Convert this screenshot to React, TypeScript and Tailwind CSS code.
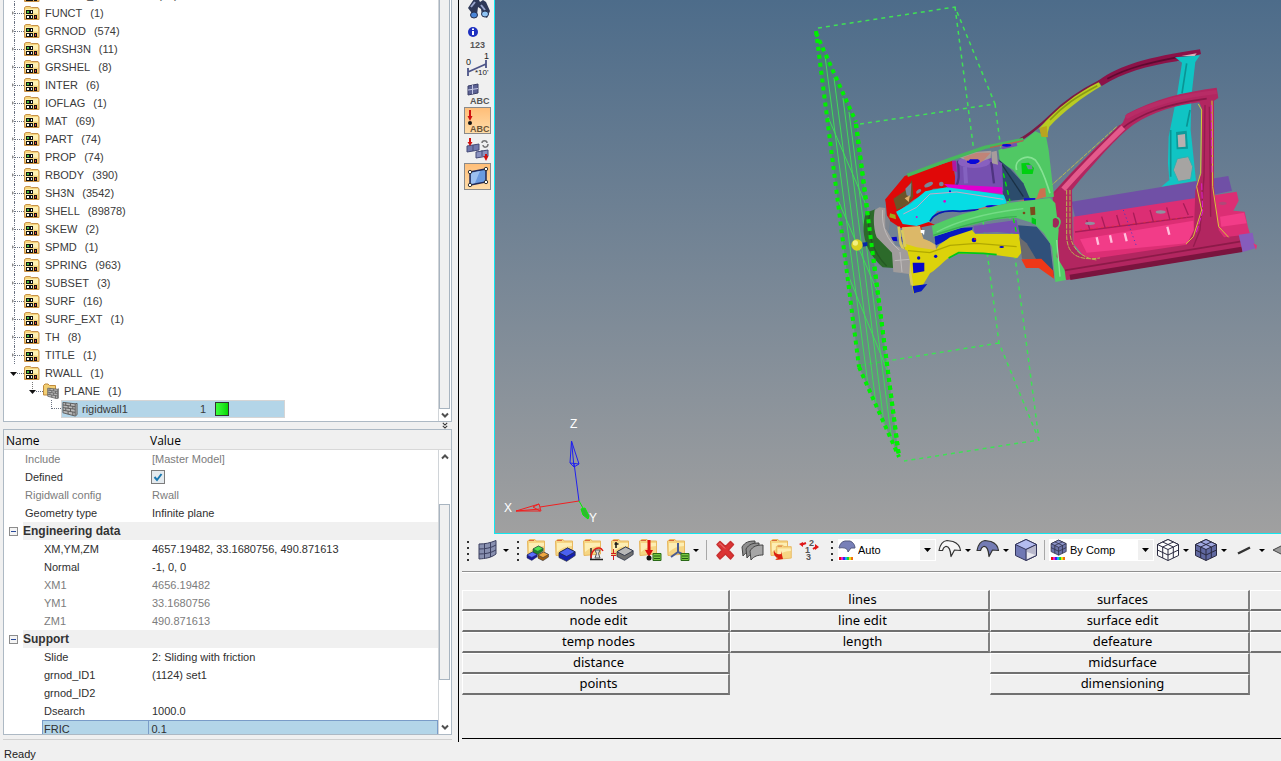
import React from "react";

const GREEN = "#00f000";

type TreeNode = { name: string; count: string };

const treeNodes: TreeNode[] = [
  { name: "ENGINE_KEYWORD", count: "(15)" },
  { name: "FUNCT", count: "(1)" },
  { name: "GRNOD", count: "(574)" },
  { name: "GRSH3N", count: "(11)" },
  { name: "GRSHEL", count: "(8)" },
  { name: "INTER", count: "(6)" },
  { name: "IOFLAG", count: "(1)" },
  { name: "MAT", count: "(69)" },
  { name: "PART", count: "(74)" },
  { name: "PROP", count: "(74)" },
  { name: "RBODY", count: "(390)" },
  { name: "SH3N", count: "(3542)" },
  { name: "SHELL", count: "(89878)" },
  { name: "SKEW", count: "(2)" },
  { name: "SPMD", count: "(1)" },
  { name: "SPRING", count: "(963)" },
  { name: "SUBSET", count: "(3)" },
  { name: "SURF", count: "(16)" },
  { name: "SURF_EXT", count: "(1)" },
  { name: "TH", count: "(8)" },
  { name: "TITLE", count: "(1)" },
];

/* ---------- Small tree icons ---------- */

function FolderShape() {
  return (
    <>
      <path d="M.5 2.500 2 1.500h4l1.500 1h6.500L15 4v10.500H.5z" fill="#f5d47c" stroke="#c8924a" />
      <path d="M1.500 4h12.500V9c-5-1-9 0-12.500 2z" fill="#fdf0b4" />
      <path d="M1 13.500h13.500" stroke="#e8a84a" />
    </>
  );
}

function CardFolderIcon() {
  return (
    <svg className="h-4 w-4 shrink-0" viewBox="0 0 16 16" aria-hidden="true">
      <FolderShape />
      <path d="M2 5h4v4H2zM6 5h3v4H6zM2 10h4v4H2zM6 10h3v4H6zM10 10h3v4h-3z" fill="#111" />
      <rect x="3" y="6" width="2" height="2" fill="#3fbf3f" />
      <rect x="7" y="6" width="1" height="2" fill="#fff" />
      <rect x="3" y="11" width="2" height="2" fill="#fff" />
      <rect x="7" y="11" width="1" height="2" fill="#e8f0ff" />
      <rect x="11" y="11" width="1" height="2" fill="#e04040" />
    </svg>
  );
}

function Bricks() {
  return (
    <>
      <path d="M1 1.500 14 3l2-.5v12L14 16 1 12.500z" fill="#b9b9b9" stroke="#5a5a5a" />
      <path
        d="M1 4.200l13 1.800M1 7l13 1.800M1 9.800l13 2.300M4 1.800v2.800M9 2.500v2.800M6.500 5v2.700M11.500 5.700v2.800M4 7.400v2.900M9 8.100v3M6.500 10.800v3.200M11.500 11.600v3.600M14 3v12.500"
        stroke="#5a5a5a"
        fill="none"
      />
    </>
  );
}

function WallFolderIcon() {
  return (
    <svg className="h-4 w-4 shrink-0" viewBox="0 0 16 16" aria-hidden="true">
      <path d="M.5 2.500 2 1h3l1.500 1.500h6V12H.5z" fill="#f2cf74" stroke="#c08a3c" />
      <g transform="translate(4 4) scale(.74)">
        <Bricks />
      </g>
    </svg>
  );
}

function WallIcon() {
  return (
    <svg className="h-4 w-4 shrink-0" viewBox="0 0 17 17" aria-hidden="true">
      <Bricks />
    </svg>
  );
}

function Dots() {
  return <span className="w-[9px] shrink-0 border-t border-dotted border-gray-500" />;
}

/* ---------- Scroll bar ---------- */

function Chevron({ up = false }: { up?: boolean }) {
  return (
    <svg className="h-2 w-2" viewBox="0 0 8 8" aria-hidden="true">
      <path d={up ? "M1 5.500 4 2.500 7 5.500" : "M1 2.500 4 5.500 7 2.500"} fill="none" stroke="#505050" strokeWidth="2" />
    </svg>
  );
}

/* ---------- Model tree ---------- */

function ModelTree() {
  return (
    <section
      aria-label="Model browser"
      className="flex h-[422px] shrink-0 overflow-hidden border border-t-0 border-[#adb9c4] bg-white text-[11px] text-[#3a3a3a]"
    >
      <ul className="-mt-[14px] min-w-0 flex-1">
        {treeNodes.map((n) => (
          <li key={n.name} className="ml-2 flex h-[18px] items-center">
            <span className="flex h-full w-[3px] items-center border-r border-dotted border-gray-500">
              <svg className="h-[6px] w-[3px]" viewBox="0 0 3 6" aria-hidden="true">
                <path d="M0 0 3 3 0 6z" fill="#8a8a8a" />
              </svg>
            </span>
            <Dots />
            <CardFolderIcon />
            <span className="ml-[5px]">{n.name}</span>
            <span className="ml-2">{n.count}</span>
          </li>
        ))}
        <li className="ml-[6px] flex h-[18px] items-center">
          <svg className="h-[5px] w-[7px]" viewBox="0 0 7 5" aria-hidden="true">
            <path d="M0 1h7L3.500 5z" fill="#111" />
          </svg>
          <span className="w-[7px] border-t border-dotted border-gray-500" />
          <CardFolderIcon />
          <span className="ml-[5px]">RWALL</span>
          <span className="ml-2">(1)</span>
        </li>
        <li className="ml-[25px] flex h-[18px] items-center">
          <svg className="h-full w-[7px]" viewBox="0 0 7 18" aria-hidden="true">
            <path d="M3.500 0v7" stroke="#777" strokeDasharray="1 1" />
            <path d="M0 8h7l-3.500 4z" fill="#111" />
          </svg>
          <span className="w-[7px] border-t border-dotted border-gray-500" />
          <WallFolderIcon />
          <span className="ml-[5px]">PLANE</span>
          <span className="ml-2">(1)</span>
        </li>
        <li className="ml-[47px] flex h-[18px]">
          <span className="h-[9px] w-[10px] border-b border-l border-dotted border-gray-500" />
          <span className="flex h-[18px] w-[224px] items-center border border-[#d5d5d5] bg-[#b3d5e8]">
            <WallIcon />
            <span className="ml-1 w-[118px]">rigidwall1</span>
            <span className="w-[15px]">1</span>
            <span className="h-[14px] w-[14px] border border-[#333] bg-linear-to-r from-[#3cff3c] to-[#00d800]" />
          </span>
        </li>
      </ul>
      <div className="flex w-[13px] shrink-0 flex-col border-l border-[#d0d4d8] bg-white">
        <div className="mr-px h-[409px] border border-t-0 border-[#a8b4c0] bg-[#f0f0f0]" />
        <button type="button" aria-label="Scroll tree down" className="flex flex-1 items-center justify-center">
          <Chevron />
        </button>
      </div>
    </section>
  );
}

/* ---------- Property table ---------- */

type Row = { name: string; value?: string; muted?: boolean; group?: boolean; nested?: boolean; check?: boolean; selected?: boolean };

const rows: Row[] = [
  { name: "Include", value: "[Master Model]", muted: true },
  { name: "Defined", check: true },
  { name: "Rigidwall config", value: "Rwall", muted: true },
  { name: "Geometry type", value: "Infinite plane" },
  { name: "Engineering data", group: true },
  { name: "XM,YM,ZM", value: "4657.19482, 33.1680756, 490.871613", nested: true },
  { name: "Normal", value: "-1, 0, 0", nested: true },
  { name: "XM1", value: "4656.19482", nested: true, muted: true },
  { name: "YM1", value: "33.1680756", nested: true, muted: true },
  { name: "ZM1", value: "490.871613", nested: true, muted: true },
  { name: "Support", group: true },
  { name: "Slide", value: "2: Sliding with friction", nested: true },
  { name: "grnod_ID1", value: "(1124) set1", nested: true },
  { name: "grnod_ID2", value: "", nested: true },
  { name: "Dsearch", value: "1000.0", nested: true },
  { name: "FRIC", value: "0.1", nested: true, selected: true },
];

function PropertyRow({ row }: { row: Row }) {
  if (row.group) {
    return (
      <tr className="h-[18px]">
        <td colSpan={2} className="p-0">
          <div className="flex h-[18px] items-center">
            <button
              type="button"
              aria-label={`Collapse ${row.name}`}
              className="mr-[5px] ml-[5px] flex h-[9px] w-[9px] items-center justify-center border border-[#8c8c8c] bg-[#f4f4f4]"
            >
              <span className="h-px w-[5px] bg-[#2a4a9a]" />
            </button>
            <div className="flex h-full flex-1 items-center bg-[#f0f0f0] text-[12px] font-bold text-[#333]">{row.name}</div>
          </div>
        </td>
      </tr>
    );
  }
  const tone = row.muted ? "text-[#7c7c7c]" : "text-[#2f2f2f]";
  if (row.selected) {
    return (
      <tr className={`h-[18px] ${tone}`}>
        <td className="p-0 pl-[38px]">
          <div className="flex h-[18px] items-center border border-r-0 border-[#7a9cc8] bg-[#b3d5e8] pl-px">{row.name}</div>
        </td>
        <td className="border border-[#7a9cc8] bg-[#b3d5e8] p-0 pl-[3px]">{row.value}</td>
      </tr>
    );
  }
  return (
    <tr className={`h-[18px] ${tone}`}>
      <td className={row.nested ? "p-0 pl-[40px]" : "p-0 pl-[21px]"}>
        {row.check ? <label htmlFor="defined">{row.name}</label> : row.name}
      </td>
      <td className="p-0 pl-[4px]">
        {row.check ? (
          <span className="relative -ml-px flex h-[14px] w-[14px]">
            <input
              id="defined"
              type="checkbox"
              defaultChecked
              className="peer h-[14px] w-[14px] appearance-none border border-[#7c7c7c] bg-[#e4eaee]"
            />
            <svg className="pointer-events-none absolute inset-0 hidden h-[14px] w-[14px] peer-checked:block" viewBox="0 0 14 14" aria-hidden="true">
              <path d="M3.500 7 6 10 10.500 4" fill="none" stroke="#1a78b0" strokeWidth="2" />
            </svg>
          </span>
        ) : (
          row.value
        )}
      </td>
    </tr>
  );
}

function PropertyPanel() {
  return (
    <section aria-label="Entity editor" className="flex min-h-0 flex-1 flex-col overflow-hidden border border-[#adb9c4] bg-white">
      <div className="flex h-5 shrink-0 items-center border-b border-[#d8d8d8] bg-[#f0f0f0] pt-[3px] pl-[2px] font-['Open_Sans','Noto_Sans',sans-serif] text-[12px] leading-[16px] text-black">
        <span className="w-[144px]">Name</span>
        <span>Value</span>
      </div>
      <div className="flex min-h-0 flex-1">
        <div className="min-w-0 flex-1 overflow-hidden">
          <table className="w-full table-fixed border-collapse text-[11px] leading-[16px]">
            <colgroup>
              <col className="w-[144px]" />
              <col />
            </colgroup>
            <tbody>
              {rows.map((r) => (
                <PropertyRow key={r.name} row={r} />
              ))}
            </tbody>
          </table>
        </div>
        <div className="flex w-[13px] shrink-0 flex-col border-l border-[#d0d4d8] bg-white">
          <button type="button" aria-label="Scroll properties up" className="flex h-[14px] items-center justify-center">
            <Chevron up />
          </button>
          <div className="mt-10 mr-px h-[176px] border border-[#a8b4c0] bg-[#f0f0f0]" />
          <button type="button" aria-label="Scroll properties down" className="mt-auto flex h-[14px] items-center justify-center">
            <Chevron />
          </button>
        </div>
      </div>
    </section>
  );
}

/* ---------- View toolbar (vertical) ---------- */

function SideButton({ label, active = false, children }: { label: string; active?: boolean; children: React.ReactNode }) {
  return (
    <button
      type="button"
      aria-label={label}
      className={
        active
          ? "mt-px flex h-[27px] w-[27px] shrink-0 items-center justify-center border border-[#8a8a8a] bg-linear-to-b from-[#ffbe78] to-[#ffdca8]"
          : "mt-px flex h-[27px] w-[27px] shrink-0 items-center justify-center"
      }
    >
      <svg className="h-6 w-6 shrink-0 overflow-visible" viewBox="0 0 24 24" aria-hidden="true">
        {children}
      </svg>
    </button>
  );
}

const tiny = { fontFamily: "Liberation Sans, Arial, sans-serif" };

function SideToolbar() {
  return (
    <div role="toolbar" aria-label="Display tools" className="flex w-8 shrink-0 flex-col items-start overflow-hidden bg-[#f0f0f0] pl-[2px]">
      <div className="-mt-[6px] flex flex-col">
        <SideButton label="Find">
          <path d="M2 11 8 2l5 1 1 2 3-2 3 2 4 9-3 7-5-3-1-6-3-2-1 8-5 3-1-6z" fill="#2e3858" />
          <path d="M5 10 9 5M15 8l4 5" stroke="#98a4cc" strokeWidth="2" />
          <ellipse cx="8" cy="18" rx="3.500" ry="3" fill="#4a86d8" stroke="#26304e" />
          <ellipse cx="19" cy="17" rx="3.500" ry="3" fill="#8fc4f4" stroke="#26304e" />
        </SideButton>
        <SideButton label="Entity numbers">
          <circle cx="7" cy="7" r="5" fill="#1d2fc0" />
          <path d="M7 6v4M7 3.500v1.500" stroke="#fff" strokeWidth="2" />
          <text x="4" y="23" fontSize="9" fontWeight="bold" fill="#555" style={tiny}>123</text>
        </SideButton>
        <SideButton label="Measure">
          <path d="M2 19 20 11M2 15v8M20 7v8" stroke="#4c5488" strokeWidth="1.800" />
          <text x="0" y="12" fontSize="9" fill="#222" style={tiny}>0</text>
          <text x="18" y="6" fontSize="9" fill="#222" style={tiny}>1</text>
          <text x="9" y="22" fontSize="8" fill="#222" style={tiny}>*10'</text>
        </SideButton>
        <SideButton label="Element labels">
          <path d="M2 5 12 3v9l-10 2z" fill="#5c6294" stroke="#3a3f68" />
          <path d="M6.500 4v9M2 9l10-1.500" stroke="#c4c8e4" />
          <text x="4" y="23" fontSize="9" fontWeight="bold" fill="#555" style={tiny}>ABC</text>
        </SideButton>
        <SideButton label="Load labels" active>
          <path d="M4 1v8" stroke="#d01010" strokeWidth="2" />
          <path d="M1.500 7h5L4 12z" fill="#d01010" />
          <circle cx="4" cy="14" r="2" fill="#111" />
          <text x="4" y="23" fontSize="9" fontWeight="bold" fill="#6a5438" style={tiny}>ABC</text>
        </SideButton>
        <SideButton label="Swap loads">
          <path d="M1 9 13 7v6L1 15z" fill="#7078ac" stroke="#444a78" />
          <path d="M10 15l12-2v6l-12 2z" fill="#8a92c0" stroke="#444a78" />
          <path d="M7 8v6M16 13v6" stroke="#444a78" />
          <path d="M4 1v5M20 17v3" stroke="#d01010" strokeWidth="2" />
          <path d="M1.500 5h5L4 9zM17.500 19h5L20 24z" fill="#d01010" />
          <path d="M16 6c0-3 5-3 5 0M22 7c0 4-5 4-5 1" fill="none" stroke="#777" strokeWidth="1.500" />
        </SideButton>
        <SideButton label="Handles" active>
          <path d="M4 7 20 4v13L4 20z" fill="#6a9ae0" stroke="#222a58" strokeWidth="1.500" />
          <path d="M5 8 14 6 9 18 5 19z" fill="#9cc0f0" />
          <g fill="#fff" stroke="#333">
            <circle cx="4" cy="7" r="1.700" />
            <circle cx="20" cy="4" r="1.700" />
            <circle cx="20" cy="17" r="1.700" />
            <circle cx="4" cy="20" r="1.700" />
          </g>
        </SideButton>
      </div>
    </div>
  );
}

/* ---------- Graphics view ---------- */

function RigidWall() {
  return (
    <g fill="none">
      <g stroke="#3fe055" strokeWidth="1.500" strokeDasharray="4 4">
        <path d="M818 28 955 7 995 104 860 124" />
        <path d="M955 7 999 343 1039 440M995 104l44 336-135 21M999 343 862 365" />
      </g>
      <path d="M816 33 856 122 899 457 859 367z" fill="#3c8c5c" fillOpacity=".4" />
      <g stroke="#3fdc58" strokeWidth="1">
        <path d="M825 56 868 385M834 78 876 404M843 98 884 424M849 112 892 442" />
        <path d="M828 117 866 205M838 200 881 300M846 270 888 372" />
      </g>
      <g stroke={GREEN} strokeWidth="4" strokeDasharray="4 4">
        <path d="M816 31 859 367" />
        <path d="M816 33 856 122" />
        <path d="M856 124 899 457" />
        <path d="M859 367 899 457" />
      </g>
    </g>
  );
}

/* Door ring, B-pillars and floor */
function SideFrame() {
  return (
    <g transform="translate(1020 30) scale(.33333)">
      <path d="M155 515 625 438 636 482 520 508 165 562z" fill="#7050a6" />
      <path d="M160 560 650 485 656 512 640 542 674 545 684 592 690 612 640 640 200 690 160 640z" fill="#dc2e74" />
      <path d="M180 628 520 572 522 612 500 640 200 668z" fill="#f23c88" />
      <path d="M600 560 672 548 680 580 604 590z" fill="#f23c88" />
      <path d="M165 606 520 560M200 570 210 600M245 560 255 592M290 555 300 590M340 548 350 585M390 540 400 575M440 532 450 570M490 520 505 555" stroke="#a81c58" strokeWidth="4" fill="none" />
      <path d="M230 622l5 22M270 616l5 22M314 610l6 24M442 590l6 24" stroke="#ffc0dc" strokeWidth="7" />
      <path d="M180 600 500 562" stroke="#e83030" strokeWidth="2" strokeDasharray="6 10" />
      <path d="M310 540 350 650" stroke="#3838c8" strokeWidth="3" strokeDasharray="3 9" />
      <ellipse cx="210" cy="580" rx="15" ry="5" fill="#9090a0" />
      <ellipse cx="422" cy="546" rx="15" ry="5" fill="#9090a0" />
      <ellipse cx="608" cy="520" rx="12" ry="5" fill="#b04878" />

      <path d="M0 328C20 318 60 288 90 258 140 208 190 178 242 152" stroke="#7c1a44" strokeWidth="7" fill="none" />
      <path d="M58 295C110 235 170 190 236 157L243 169C190 200 130 245 88 290L80 320 68 318z" fill="#b9cc22" />
      <path d="M90 270C130 226 170 200 232 167" stroke="#8a9c14" strokeWidth="5" fill="none" />
      <path d="M235 152C300 105 380 82 540 58L543 72 470 94C380 108 310 128 245 168z" fill="#8c1248" />
      <path d="M262 146C330 110 400 96 470 82" stroke="#5c0a30" strokeWidth="5" fill="none" />

      <path d="M465 82 540 76 526 96 514 200 512 300 528 452 424 470 448 450 444 400 446 320 462 240 472 190 486 98z" fill="#10c4c4" />
      <path d="M500 100 486 190M510 240 500 290M452 300 452 440" stroke="#0a9494" strokeWidth="5" />
      <path d="M484 78 530 70 524 78z" fill="#d8b0b8" />
      <path d="M468 306 500 302 504 356 470 358z" fill="#0c9a9a" />
      <path d="M473 315 495 312 497 350 475 352z" fill="#b8b0b0" />
      <path d="M472 386 505 380 518 410 512 448 475 454 460 420z" fill="#a6a4a2" stroke="#30b0b0" strokeWidth="3" />

      <path
        fillRule="evenodd"
        d="M98 490 150 432 230 350 308 278 320 252C400 208 490 186 590 173L595 204 582 212 582 470 596 600 612 622 664 616 668 664 140 750 108 720 100 600zM156 480 178 452C220 405 290 320 340 284 400 245 470 225 538 217L546 236 544 430 526 480 522 600 500 644 250 682C190 690 165 670 158 630z"
        fill="#b22660"
      />
      <path d="M318 262C400 216 500 196 590 186" stroke="#b82c66" strokeWidth="12" fill="none" />
      <path d="M300 300C360 250 440 222 560 206" stroke="#8a1848" strokeWidth="5" fill="none" />
      <path d="M130 478C190 410 250 350 310 292" stroke="#e45a8c" strokeWidth="16" fill="none" />
      <path d="M104 488C170 414 230 356 300 286" stroke="#a82458" strokeWidth="4" fill="none" />
      <path d="M150 742 666 658" stroke="#7a143e" strokeWidth="16" fill="none" />
      <path d="M130 722 664 634" stroke="#8c1a48" strokeWidth="5" fill="none" />
      <path d="M555 225 552 440 540 600 520 650M568 230 572 560" stroke="#941c4e" strokeWidth="4" fill="none" />
      <path d="M535 222 545 240 542 430 530 470 545 540 520 620 498 642M576 212 578 470 596 590 626 622" stroke="#d8c838" strokeWidth="3" fill="none" />
      <path d="M545 460 548 545 528 610M574 225 576 430" stroke="#e020d0" strokeWidth="3" fill="none" strokeDasharray="20 6" />
      <path d="M140 480 140 620C142 670 170 694 240 684M150 480 150 610C154 660 190 685 230 690M90 470 290 290" stroke="#b8b850" strokeWidth="3" fill="none" strokeDasharray="14 3" />
      <path d="M656 614 698 608 706 655 668 666z" fill="#865cbc" />
      <path d="M700 640 711 646 708 660z" fill="#e83078" />
    </g>
  );
}

/* Rails, shock tower, wheel house and bumper */
function FrontEnd() {
  return (
    <g transform="translate(850 130) scale(.33333)">
      <path d="M445 60 520 32 556 4 588 18 596 60 604 130 612 200 560 206 536 204 520 160 490 120 450 96z" fill="#50c864" />
      <path d="M568 -6 590 -12 594 22 574 20z" fill="#b9a51e" />
      <path d="M500 120C490 90 530 70 556 90 580 120 590 160 600 190" stroke="#86e294" strokeWidth="5" fill="none" />
      <path d="M514 100 536 98 552 114 548 132 516 132z" fill="#00d010" />
      <path d="M528 104 545 106 548 118 534 118z" fill="#6c8894" />
      <path d="M520 26C540 12 552 4 570 -14" stroke="#7c1a44" strokeWidth="4" fill="none" />
      <path d="M446 88 480 116 520 160 540 206 470 214 458 190z" fill="#2c4c6c" />
      <path d="M450 95 520 200" stroke="#1a3044" strokeWidth="4" />

      <path d="M164 138 308 92 320 172 250 176 190 210 138 250 160 288 118 262 106 208z" fill="#e00808" />
      <path d="M130 206 168 180 186 150 190 200 176 222 140 240z" fill="#6c5428" />
      <path d="M166 176 184 158 182 200 170 196z" fill="#76889a" />
      <path d="M164 205 180 196 176 216z" fill="#dcb068" />
      <ellipse cx="206" cy="184" rx="9" ry="5" transform="rotate(-40 206 184)" fill="#76889a" />
      <ellipse cx="236" cy="164" rx="14" ry="6" transform="rotate(-25 236 164)" fill="#76889a" />
      <ellipse cx="274" cy="162" rx="7" ry="7" fill="#76889a" />

      <path d="M318 96 430 84 456 100 460 184 400 178 314 166z" fill="#7650b0" />
      <path d="M324 92C326 130 330 150 318 168M424 96 432 160" stroke="#4e3480" strokeWidth="7" fill="none" />
      <path d="M345 110 348 160" stroke="#8462c0" strokeWidth="12" />
      <ellipse cx="372" cy="96" rx="48" ry="18" fill="#8860c0" />
      <path d="M306 92 318 92 320 126 308 122z" fill="#b018a0" />
      <path d="M424 66 440 62 444 104 426 100z" fill="#a89c9c" />
      <path d="M324 80 372 66 424 62 422 84 400 92 340 88z" fill="#a89c9c" />
      <path d="M340 82 380 68 422 68 400 92 384 102 356 102z" fill="#c08478" />
      <path d="M350 92h6l4-4h24l6 5-6 6-8 3h-14l-10-4z" fill="#0808d8" />
      <path d="M172 136 300 88 404 52 520 28" stroke="#48b85c" strokeWidth="10" fill="none" />
      <path d="M420 53 520 32" stroke="#b46450" strokeWidth="4" />
      <path d="M454 50 500 38 502 48 458 58z" fill="#7650b0" />
      <ellipse cx="470" cy="46" rx="14" ry="4" fill="#0808d8" />
      <path d="M282 162 456 172 458 192 380 184 300 178z" fill="#e000d0" />

      <path d="M137 246 180 222 226 184 290 172 400 186 462 196 470 220 420 232 330 242 262 242 240 270 236 290 152 288z" fill="#06dce4" />
      <path d="M160 252 200 232 240 192 320 186 460 208" stroke="#c8a8c8" strokeWidth="3" fill="none" />
      <path d="M240 274C254 246 290 240 330 244L400 238" stroke="#0818b0" strokeWidth="5" fill="none" />
      <circle cx="284" cy="214" r="4" fill="#e000d0" />
      <circle cx="200" cy="261" r="3" fill="#e000d0" />
      <circle cx="300" cy="184" r="3" fill="#0808d8" />
      <path d="M106 208 128 212 140 250 158 282 200 288 236 276 262 288 230 300 152 294 112 268z" fill="#dc0808" />
      <path d="M120 250 136 254 138 268 118 262z" fill="#a0a818" />

      <path d="M370 288 500 270 508 312 440 306 374 310z" fill="#7650b0" />
      <path d="M246 322 330 294 368 292 364 306 290 330 258 346z" fill="#0818c0" />
      <path d="M156 292 210 288 218 320 256 344 260 366 200 364 160 350z" fill="#dcb868" />
      <path d="M214 292 250 284 256 340 220 326z" fill="#70808e" />
      <path d="M212 300h12l-2 16-4-6-6-2z" fill="#fff" />
      <path d="M160 340 200 352 256 360 268 344 300 322 366 300 376 312 506 312 516 366 502 384 400 370 320 372C284 384 270 412 240 430L206 486 190 490 174 400z" fill="#dcd20a" />
      <path d="M174 362 240 368 300 346 380 340 500 350" stroke="#b0a800" strokeWidth="4" fill="none" />
      <path d="M188 398 223 398 223 424 190 430z" fill="#0808c8" />
      <path d="M188 468 232 462 214 484 192 490z" fill="#0818c0" />
      <path d="M296 384 326 368 400 370 440 374" stroke="#00c818" strokeWidth="5" fill="none" />
      <circle cx="372" cy="330" r="7" fill="#0808c8" />
      <circle cx="375" cy="327" r="3" fill="#e01010" />
      <g fill="#0808c8">
        <circle cx="206" cy="384" r="5" />
        <circle cx="257" cy="379" r="5" />
        <ellipse cx="455" cy="351" rx="7" ry="3" />
        <path d="M124 322 140 320 142 334 128 332zM148 322l9-2v16l-8-2z" />
      </g>
      <path d="M146 290 152 340 176 400 186 466M156 300 166 350" stroke="#d8c860" strokeWidth="8" fill="none" />

      <path d="M504 286 560 290 600 340 612 440 570 400 524 384 512 330z" fill="#30507a" />
      <path d="M508 322 530 340 560 390 516 386z" fill="#6a6a6e" />
      <path d="M514 388 574 386 610 422 612 446 566 414 528 414z" fill="#ee3818" />
      <path d="M384 236 420 226 470 226 440 240 390 244z" fill="#b87860" />
      <ellipse cx="426" cy="229" rx="20" ry="4" fill="#0808d8" />
      <path d="M500 214 560 204 570 176 586 174 588 200 540 214z" fill="#cc7050" />
      <path d="M522 204h34v8h-34z" fill="#1018c8" />
      <path d="M246 288C320 250 420 232 480 218L600 204 616 220 626 300 620 380 644 420 648 450 616 456 606 350 582 310 550 280 500 264C420 262 330 296 250 320z" fill="#52cc66" />
      <path d="M260 306C330 270 430 246 520 236" stroke="#74dc86" strokeWidth="4" fill="none" />
      <path d="M250 316C330 290 420 262 500 260" stroke="#3cae52" strokeWidth="4" fill="none" />
      <path d="M540 232 555 230 556 254 542 256z" fill="#7c4a1c" />
      <circle cx="522" cy="249" r="4" fill="#7c4a1c" />
      <path d="M545 262 558 268 558 284 545 280z" fill="#00c818" />
      <path d="M606 268C612 256 630 262 630 276 628 296 614 300 606 290z" stroke="#52cc66" strokeWidth="5" fill="#a02458" />
      <path d="M620 330 630 440" stroke="#8ae498" strokeWidth="4" />

      <path d="M48 248 76 238 78 300 128 364 130 414 98 412C50 370 28 310 48 248z" fill="#2c6a2a" />
      <path d="M60 250C46 300 70 370 110 408" stroke="#245a22" strokeWidth="4" fill="none" />
      <path d="M74 240 88 232 106 234 108 296 136 346 172 362 180 394 178 432 130 426 126 368 80 322C70 296 70 262 74 240z" fill="#a09c9c" />
      <path d="M106 250 120 270 116 304 106 296z" fill="#80868e" />
      <path d="M98 240C94 290 110 330 148 360M150 366 156 426M134 392 178 388" stroke="#c0bcbc" strokeWidth="3" fill="none" />
      <path d="M36 338 52 336 52 348 38 350z" fill="#0828a8" />
      <circle cx="21" cy="345" r="17" fill="#d8d020" />
      <circle cx="16" cy="339" r="8" fill="#f4f080" />
      <path d="M460 130 480 214M490 266 500 312" stroke={GREEN} strokeWidth="4" strokeDasharray="14 12" />
    </g>
  );
}

function Triad() {
  const font = { fontFamily: "Liberation Sans, Arial, sans-serif" };
  return (
    <g fill="none">
      <g stroke="#2020f0">
        <path d="M579 501 574 463M571.500 441l-1.500 22 9 1zM571.500 441l2.500 26-4-4M579 464l-5 3" />
      </g>
      <g stroke="#f02020">
        <path d="M579 501 540 507M516 511l23-7 2 7zM516 511l24-2M539 504l-6 3 7 4" />
      </g>
      <path d="M579 501l4 7" stroke={GREEN} />
      <path d="M581 509l4-1 4 8-1 3-5-4z" fill="#30b830" stroke={GREEN} />
      <g fill="#fff" fontSize="12" style={font}>
        <text x="504" y="512">X</text>
        <text x="570" y="428">Z</text>
        <text x="589" y="522">Y</text>
      </g>
    </g>
  );
}

function GraphicsView() {
  return (
    <div className="min-h-0 min-w-0 flex-1 border-b border-l border-[#10e8f0] bg-linear-to-b from-[#4d6c8a] to-[#a0a0a0]">
      <svg
        className="block h-full w-full"
        viewBox="495 0 786 533"
        preserveAspectRatio="xMinYMin slice"
        role="img"
        aria-label="Vehicle body model with rigid wall"
      >
        <RigidWall />
        <SideFrame />
        <FrontEnd />
        <path d="M856 124 899 457" stroke={GREEN} strokeWidth="4" strokeDasharray="4 4" />
        <Triad />
      </svg>
    </div>
  );
}

/* ---------- Bottom toolbar ---------- */

function Grip() {
  return (
    <svg className="mx-[4px] h-6 w-[4px] shrink-0" viewBox="0 0 4 24" aria-hidden="true">
      <path d="M1 3h2v2H1zM1 9h2v2H1zM1 15h2v2H1zM1 21h2v2H1z" fill="#333" />
    </svg>
  );
}

function MenuArrow({ label }: { label: string }) {
  return (
    <button type="button" aria-label={label} className="flex h-7 w-[10px] shrink-0 items-center justify-start pl-px">
      <svg className="h-[3px] w-[6px]" viewBox="0 0 6 3" aria-hidden="true">
        <path d="M0 0h6L3 3z" fill="#000" />
      </svg>
    </button>
  );
}

function Tool({ label, children }: { label: string; children: React.ReactNode }) {
  return (
    <button type="button" aria-label={label} className="flex h-7 w-7 shrink-0 items-center justify-center">
      <svg className="h-6 w-6 overflow-visible" viewBox="0 0 24 24" aria-hidden="true">
        {children}
      </svg>
    </button>
  );
}

function BigFolder() {
  return (
    <>
      <path d="M1.500 3 4 1.500h5l1 1.500h8.500v13L2 17.500z" fill="#f6d684" stroke="#e8b860" />
      <path d="M3 5h15v3C12 8 7 10 3 14z" fill="#fdeeb4" />
      <path d="M3 2.500h5" stroke="#d86a3a" />
    </>
  );
}

function Slab({ x, y, s, top, side }: { x: number; y: number; s: number; top: string; side: string }) {
  return (
    <g transform={`translate(${x} ${y}) scale(${s})`} stroke="#222a40" strokeWidth=".8">
      <path d="M0 5 9 0l8 4v4l-9 6-8-4z" fill={side} />
      <path d="M0 5 9 0l8 4-9 5z" fill={top} />
    </g>
  );
}

function CubeGrid({ fill, top }: { fill: string; top: string }) {
  return (
    <g stroke="#2a2a40" strokeWidth="1" strokeLinejoin="round">
      <path d="M1.500 6.500 12 1.500l10.500 5v11L12 22.500l-10.500-5z" fill={fill} />
      <path d="M1.500 6.500 12 1.500l10.500 5L12 11.500z" fill={top} />
      <path d="M12 11.500v11M6.700 9v11M17.300 9v11M1.500 12 12 17l10.500-5M6.700 4l10.600 5M17.300 4 6.700 9" fill="none" />
    </g>
  );
}

function CurvedSheet({ fill }: { fill: string }) {
  return (
    <path
      d="M1 12.500C2 7 5 3 9 2.500L15 3.500C19 5 22 8 22.500 12.500L16.500 12 13 18.500C12.500 12 11 8 7.500 8.500 6 9 5 10.500 4.500 12.500z"
      fill={fill}
      stroke="#333"
      strokeWidth="1.200"
      strokeLinejoin="round"
    />
  );
}

function Rainbow() {
  const colors = ["#e81010", "#f020c0", "#4020f0", "#10b0f0", "#10d040", "#e8e010", "#f07010"];
  return (
    <g>
      {colors.map((c, i) => (
        <rect key={c} x={1 + i * 2} y="18" width="2" height="3" fill={c} />
      ))}
    </g>
  );
}

function Combo({ id, label, value, wide = false, children }: { id: string; label: string; value: string; wide?: boolean; children: React.ReactNode }) {
  return (
    <div className={wide ? "flex h-[22px] w-[105px] shrink-0 items-center bg-white pl-px" : "flex h-[22px] w-[98px] shrink-0 items-center bg-white"}>
      <label htmlFor={id} className="flex w-5 shrink-0 items-center" aria-label={label}>
        <svg className="h-[22px] w-[18px]" viewBox="0 0 18 22" aria-hidden="true">
          {children}
          <Rainbow />
        </svg>
      </label>
      <select id={id} defaultValue={value} className="h-full min-w-0 flex-1 appearance-none bg-transparent text-[11px] text-black">
        <option>{value}</option>
      </select>
      <span className="pointer-events-none mr-px flex h-5 w-[15px] items-center justify-center bg-[#f0f0f0]">
        <svg className="h-[4px] w-[7px]" viewBox="0 0 7 4" aria-hidden="true">
          <path d="M0 0h7L3.500 4z" fill="#000" />
        </svg>
      </span>
    </div>
  );
}

function Separator() {
  return <span className="mx-[4px] h-5 w-px shrink-0 bg-[#a8a8a8]" />;
}

function BottomToolbar() {
  return (
    <div role="toolbar" aria-label="Collectors and visualization" className="flex h-[38px] shrink-0 items-center overflow-hidden border-b border-[#909090] bg-[#f0f0f0] pb-[5px]">
      <Grip />
      <Tool label="Surface mesh">
        <path d="M3 6C9 6 14 5 20 2.500V16C15 20 9 20.500 3 21z" fill="#8890b0" stroke="#3c4060" />
        <path d="M3 11c6 0 12-1 17-4M3 16c6 0 12-1 17-4M8.500 6v14.500M14.500 5v14" fill="none" stroke="#3c4060" />
      </Tool>
      <MenuArrow label="Surface options" />
      <Grip />
      <Tool label="Assemblies">
        <BigFolder />
        <Slab x={7} y={8} s={0.6} top="#50e050" side="#208a28" />
        <Slab x={1} y={14} s={0.6} top="#5a6cff" side="#1818a0" />
        <Slab x={12} y={14} s={0.62} top="#f0a840" side="#a06010" />
      </Tool>
      <Tool label="Components">
        <BigFolder />
        <Slab x={5} y={10} s={0.95} top="#4a60f0" side="#1420b0" />
      </Tool>
      <Tool label="Materials">
        <BigFolder />
        <path d="M9 22V10M8 21.500h13" fill="none" stroke="#222" strokeWidth="1.400" />
        <path d="M9 20c0-8 8-14 12-7" fill="none" stroke="#e01818" strokeWidth="1.500" />
        <path d="M13 12h5l-1.500 3.500L18 20h-5l1.500-4.500z" fill="#ddd" stroke="#555" />
      </Tool>
      <Tool label="Properties">
        <BigFolder />
        <Slab x={7} y={9} s={0.95} top="#b8b8b8" side="#707070" />
        <path d="M6 4v6M4.500 6h4" stroke="#111" strokeWidth="1.500" />
        <path d="M3.500 11v4M3.500 18v4M1 15.500h5M1 17.500h5" stroke="#d02020" />
      </Tool>
      <Tool label="Load collectors">
        <BigFolder />
        <path d="M11 2v13" stroke="#d81010" strokeWidth="3" />
        <path d="M7 12h8l-4 7z" fill="#d81010" />
        <circle cx="11" cy="20" r="2.500" fill="#111" />
        <path d="M15 15.500h8v7h-8z" fill="#78c840" stroke="#2a6a18" />
        <path d="M16 18h6M16 20.500h6" stroke="#225a10" />
      </Tool>
      <Tool label="System collectors">
        <BigFolder />
        <path d="M12 5v9l-7 5M12 14l6 3" fill="none" stroke="#4a5c94" strokeWidth="2" />
        <path d="M15 15.500h8v7h-8z" fill="#78c840" stroke="#2a6a18" />
        <path d="M16 18h6M16 20.500h6" stroke="#225a10" />
      </Tool>
      <MenuArrow label="More collectors" />
      <Separator />
      <Tool label="Delete">
        <path d="M4 6.500 7 3.500 12.500 8.500l5-5 3 3-5 5.500 5 5.500-3 3.500-5-5-5.500 5-3-3.500 5-5.500z" fill="#dc3434" stroke="#c83030" strokeLinejoin="round" strokeWidth="1.500" />
        <path d="M6 6.500 7 5.500l5 5" stroke="#f08080" fill="none" />
      </Tool>
      <Tool label="Card edit">
        <g fill="#8e8e8e" stroke="#444">
          <path d="M1 9C4 4 8 3 14 3v10c-5 0-9 1-12 5z" />
          <path d="M5 11C8 6 12 5 18 5v10c-5 0-9 1-12 5z" />
          <path d="M9 13c3-5 7-6 13-6v10c-5 0-9 1-12 5z" fill="#a6a6a6" />
        </g>
      </Tool>
      <Tool label="Organize">
        <BigFolder />
        <g transform="translate(6 6) scale(.88)">
          <BigFolder />
        </g>
        <path d="M5 12c1 4 4 5 7 4v-3l2 8-8 1 3-2c-3-1-5-4-4-8z" fill="#dc2010" />
      </Tool>
      <Tool label="Renumber">
        <g fontSize="9" fontWeight="bold" fill="#555" style={tiny}>
          <text x="12" y="8">2</text>
          <text x="8" y="15">1</text>
          <text x="9" y="22">3</text>
        </g>
        <path d="M9 5 5 6.500M16 11l3-2" stroke="#e01818" strokeWidth="2" />
        <path d="M2 6l4-2v5zM22 9l-4-3v6z" fill="#e01818" />
      </Tool>
      <span className="w-[3px] shrink-0" />
      <Grip />
      <Combo id="geometry-color" label="Geometry color mode" value="Auto">
        <path d="M1 9C1.500 5 4 2.500 7 2h5c3 1 5 4 5 7h-4l-3 4C10 10 7 8 1 9z" fill="#7880b8" stroke="#555a80" />
      </Combo>
      <Tool label="Wireframe geometry">
        <CurvedSheet fill="#f6f6f6" />
      </Tool>
      <MenuArrow label="Wireframe geometry options" />
      <Tool label="Shaded geometry">
        <CurvedSheet fill="#747cb4" />
      </Tool>
      <MenuArrow label="Shaded geometry options" />
      <Tool label="Transparency">
        <g stroke="#34365c" strokeLinejoin="round">
          <path d="M1.500 6.500 12 1.500l10.500 5v11L12 22.500l-10.500-5z" fill="#7078b4" />
          <path d="M1.500 6.500 12 1.500l10.500 5L12 11.500z" fill="#b4bcf0" />
          <path d="M12 11.500 22.500 6.500v11L12 22.500z" fill="#b8b8cc" />
          <path d="M13 21 21.500 17 13 14z" fill="#e8e8ee" stroke="none" />
        </g>
      </Tool>
      <Separator />
      <Combo id="element-color" label="Element color mode" value="By Comp" wide>
        <g transform="translate(0 0) scale(.72)">
          <CubeGrid fill="#6c74a8" top="#8a92c8" />
        </g>
      </Combo>
      <Tool label="Wireframe elements">
        <CubeGrid fill="#fbfbfb" top="#ffffff" />
      </Tool>
      <MenuArrow label="Wireframe element options" />
      <Tool label="Shaded elements">
        <CubeGrid fill="#6068a0" top="#a0a8e0" />
      </Tool>
      <MenuArrow label="Shaded element options" />
      <Tool label="1D elements">
        <path d="M6 15.500 18 9.500" stroke="#333" strokeWidth="2.500" />
      </Tool>
      <MenuArrow label="1D element options" />
      <Tool label="2D elements">
        <path d="M3 12 13 7l10 5-10 5z" fill="#9a9a9a" stroke="#444" />
      </Tool>
    </div>
  );
}

/* ---------- Panel menu ---------- */

const menuColumns: string[][] = [
  ["nodes", "node edit", "temp nodes", "distance", "points"],
  ["lines", "line edit", "length"],
  ["surfaces", "surface edit", "defeature", "midsurface", "dimensioning"],
];

function PanelMenu() {
  return (
    <nav
      aria-label="Panels"
      className="grid h-[167px] shrink-0 grid-cols-[268px_260px_260px_minmax(0,1fr)] items-start overflow-hidden border-t border-b border-t-white border-b-black pt-[17px] font-['Noto_Sans','Open_Sans',sans-serif] text-[13px] text-black"
    >
      {menuColumns.map((items) => (
        <div key={items[0]} className="flex flex-col">
          {items.map((item) => (
            <button
              key={item}
              type="button"
              className="flex h-[21px] items-center justify-center border-t border-r-2 border-b-2 border-l border-t-white border-r-[#808080] border-b-[#707070] border-l-white bg-[#f0f0f0] pb-[2px] pl-[6px] leading-[16px]"
            >
              {item}
            </button>
          ))}
        </div>
      ))}
      <div className="flex flex-col">
        {["solids", "solid edit", "ribs"].map((item) => (
          <button
            key={item}
            type="button"
            aria-label={item}
            className="h-[21px] border-t border-b-2 border-l border-t-white border-b-[#707070] border-l-white bg-[#f0f0f0]"
          />
        ))}
      </div>
    </nav>
  );
}

export default function App() {
  return (
    <div className="flex h-screen flex-col overflow-hidden bg-[#f0f0f0] font-['Liberation_Sans',Arial,sans-serif]">
      <main className="flex min-h-0 flex-1">
        <aside className="flex w-[459px] shrink-0 flex-col border-r border-black pr-[6px] pl-[3px]">
          <ModelTree />
          <div className="flex h-[7px] shrink-0 items-center justify-end pr-1">
            <button type="button" aria-label="Collapse panel" className="flex">
              <svg className="h-[7px] w-[6px]" viewBox="0 0 6 8" aria-hidden="true">
                <path d="M.5 1 3 3.500 5.500 1M.5 4.500 3 7l2.500-2.500" fill="none" stroke="#333" strokeWidth="1.200" />
              </svg>
            </button>
          </div>
          <PropertyPanel />
          <div className="mb-[2px] h-[5px] shrink-0 border-b border-[#d0d0d0]" />
        </aside>
        <div className="flex min-w-0 flex-1 flex-col pb-[3px] pl-[3px]">
          <div className="flex min-h-0 flex-1">
            <SideToolbar />
            <GraphicsView />
          </div>
          <BottomToolbar />
          <PanelMenu />
        </div>
      </main>
      <footer className="flex h-[19px] shrink-0 items-center pt-[6px] pl-1 text-[11px] leading-[13px] text-[#222]">Ready</footer>
    </div>
  );
}
